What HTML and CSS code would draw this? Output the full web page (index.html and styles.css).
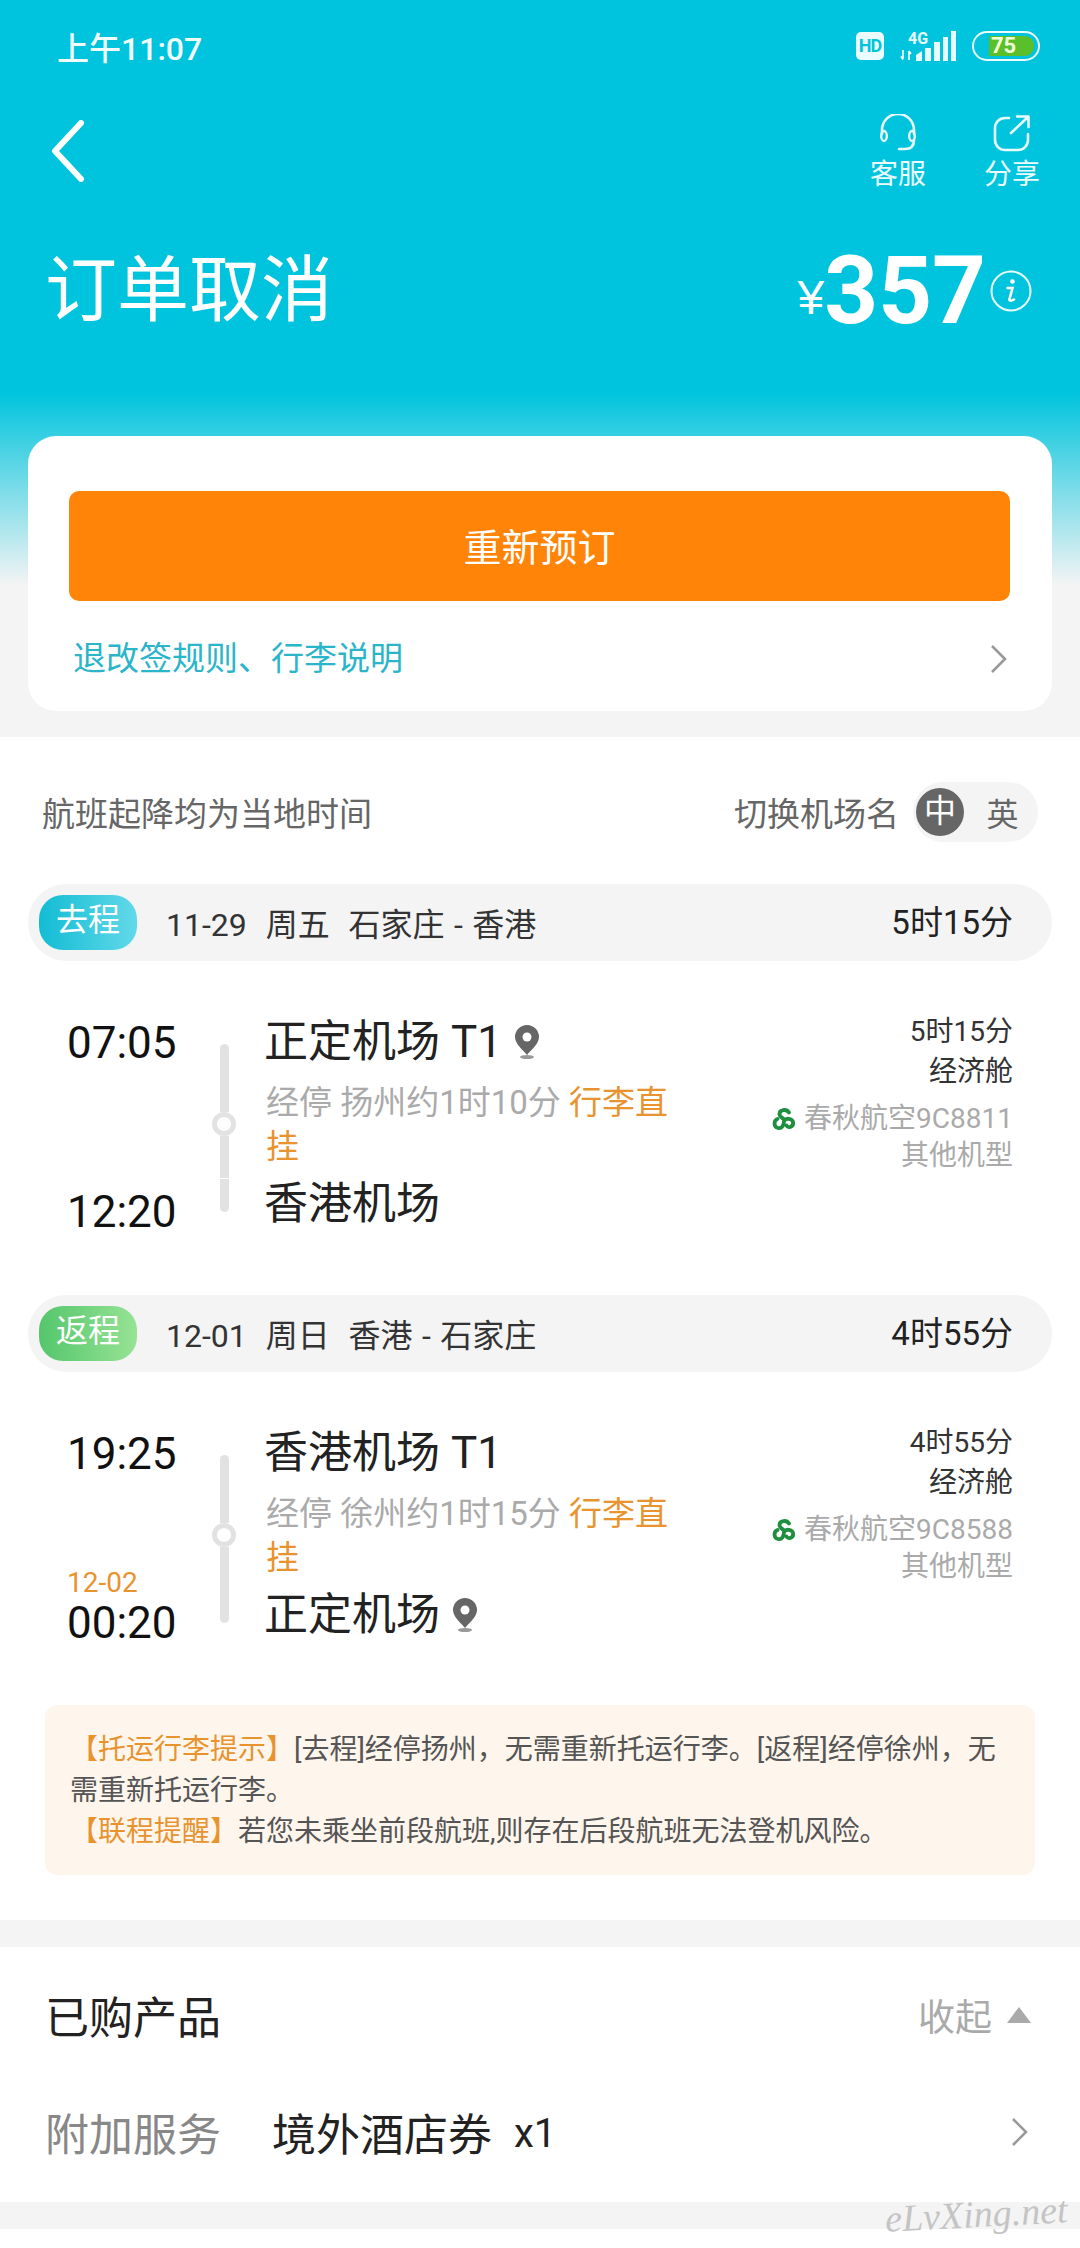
FILE: index.html
```html
<!DOCTYPE html>
<html lang="zh-CN">
<head>
<meta charset="utf-8">
<title>订单取消</title>
<link rel="stylesheet" href="styles.css">
</head>
<body>
<div class="page">
  <header class="top">
    <div class="status">
      <span class="clock">上午11:07</span>
      <div class="status-icons">
        <span class="hd">HD</span>
        <div class="net">
          <span class="net-label">4G</span>
          <svg class="net-arrows" viewBox="0 0 12 12" width="12" height="12"><path d="M3 1v9M1 7.500 3 10.500M9 11V2M9 2l2 3" fill="none" stroke="#fff" stroke-width="1.600"/></svg>
        </div>
        <svg class="signal" viewBox="0 0 40 30" width="40" height="30"><path d="M0 30V24L6 20V30ZM9 30V17h6V30ZM18 30V11h6V30ZM27 30V6h5V30ZM35 30V0h5V30Z" fill="#e8fbfd"/></svg>
        <div class="battery"><span class="battery-fill">75</span></div>
      </div>
    </div>
    <div class="nav">
      <svg class="back" viewBox="0 0 36 62" width="36" height="62"><path d="M31 3 5 31l26 28" fill="none" stroke="#fff" stroke-width="6" stroke-linecap="round" stroke-linejoin="round"/></svg>
      <div class="actions">
        <div class="action">
          <svg viewBox="0 0 40 38" width="40" height="38"><path d="M4 20v-4a15.500 15.500 0 0 1 32 0v4M36 26c0 6-3 9-9 9h-6" fill="none" stroke="#e8fbfd" stroke-width="2.600" stroke-linecap="round"/><ellipse cx="6" cy="22" rx="2.800" ry="5" fill="none" stroke="#e8fbfd" stroke-width="2.400"/><ellipse cx="34" cy="22" rx="2.800" ry="5" fill="none" stroke="#e8fbfd" stroke-width="2.400"/></svg>
          <span>客服</span>
        </div>
        <div class="action">
          <svg viewBox="0 0 40 38" width="40" height="38"><path d="M17 4h-4a10 10 0 0 0-10 10v12a10 10 0 0 0 10 10h13a10 10 0 0 0 10-10v-6M19 19 36 3M25 2.500h11.500V13" fill="none" stroke="#e8fbfd" stroke-width="2.600" stroke-linecap="round" stroke-linejoin="round"/></svg>
          <span>分享</span>
        </div>
      </div>
    </div>
    <div class="headline">
      <h1 class="title">订单取消</h1>
      <div class="price">
        <span class="yen">¥</span><span class="amount">357</span>
        <svg class="info" viewBox="0 0 42 42" width="42" height="42"><circle cx="21" cy="21" r="19.500" fill="none" stroke="#e8fbfd" stroke-width="2"/><circle cx="22.500" cy="11.500" r="2.300" fill="#fff"/><path d="M17.500 18h5l-3 11c-.5 2 1.500 2.500 4.500.5" fill="none" stroke="#fff" stroke-width="2.600" stroke-linecap="round"/></svg>
      </div>
    </div>
    <section class="card">
      <div class="rebook">重新预订</div>
      <div class="rules">
        <span>退改签规则、行李说明</span>
        <svg class="rules-arrow" viewBox="0 0 18 30" width="18" height="30"><path d="M2 2 15 15 2 28" fill="none" stroke="#999" stroke-width="2.600"/></svg>
      </div>
    </section>
  </header>

  <main class="flights">
    <div class="switch-row">
      <span class="local-note">航班起降均为当地时间</span>
      <div class="switcher">
        <span class="switch-label">切换机场名</span>
        <div class="toggle"><span class="toggle-on">中</span><span class="toggle-off">英</span></div>
      </div>
    </div>

    <div class="leg-bar">
      <span class="leg-tag leg-go">去程</span>
      <span class="leg-info">11-29&nbsp; 周五&nbsp; 石家庄 - 香港</span>
      <span class="leg-dur">5时15分</span>
    </div>
    <div class="flight">
      <div class="times">
        <div class="time">07:05</div>
        <div class="time">12:20</div>
      </div>
      <div class="rail"><i class="seg s1"></i><i class="dot"></i><i class="seg s2"></i><i class="seg s3"></i></div>
      <div class="route">
        <div class="airport">正定机场 T1
          <svg class="pin" viewBox="0 0 26 34" width="26" height="34"><path d="M13 0a12 12 0 0 0-12 12c0 7 8 13 12 18 4-5 12-11 12-18a12 12 0 0 0-12-12Z" fill="#666"/><circle cx="13" cy="12" r="4.500" fill="#fff"/><ellipse cx="13" cy="32" rx="7" ry="2" fill="#999"/></svg>
        </div>
        <div class="stop">经停 扬州约1时10分 <em>行李直挂</em></div>
        <div class="airport">香港机场</div>
      </div>
      <div class="meta">
        <div>5时15分</div>
        <div>经济舱</div>
        <div class="carrier">
          <svg viewBox="0 0 24 24" width="24" height="24"><path d="M17 5.500C14.500 1.500 7.500 2.500 7.500 7c0 3 3.500 4 5 6M12.500 13.500c1.500-2.500 7.500-2.500 8.500 1.500 1 5-5 6.500-6.500 3.500M5.500 12C1.500 13.500 1.500 20 6 21c4 1 6-3 6-7" fill="none" stroke="#1e8f3e" stroke-width="3.800" stroke-linecap="round"/></svg>
          春秋航空9C8811
        </div>
        <div class="plane">其他机型</div>
      </div>
    </div>

    <div class="leg-bar">
      <span class="leg-tag leg-back">返程</span>
      <span class="leg-info">12-01&nbsp; 周日&nbsp; 香港 - 石家庄</span>
      <span class="leg-dur">4时55分</span>
    </div>
    <div class="flight last">
      <div class="times">
        <div class="time">19:25</div>
        <div><div class="next-day">12-02</div><div class="time">00:20</div></div>
      </div>
      <div class="rail"><i class="seg s1"></i><i class="dot"></i><i class="seg s4"></i></div>
      <div class="route">
        <div class="airport">香港机场 T1</div>
        <div class="stop">经停 徐州约1时15分 <em>行李直挂</em></div>
        <div class="airport">正定机场
          <svg class="pin" viewBox="0 0 26 34" width="26" height="34"><path d="M13 0a12 12 0 0 0-12 12c0 7 8 13 12 18 4-5 12-11 12-18a12 12 0 0 0-12-12Z" fill="#666"/><circle cx="13" cy="12" r="4.500" fill="#fff"/><ellipse cx="13" cy="32" rx="7" ry="2" fill="#999"/></svg>
        </div>
      </div>
      <div class="meta">
        <div>4时55分</div>
        <div>经济舱</div>
        <div class="carrier">
          <svg viewBox="0 0 24 24" width="24" height="24"><path d="M17 5.500C14.500 1.500 7.500 2.500 7.500 7c0 3 3.500 4 5 6M12.500 13.500c1.500-2.500 7.500-2.500 8.500 1.500 1 5-5 6.500-6.500 3.500M5.500 12C1.500 13.500 1.500 20 6 21c4 1 6-3 6-7" fill="none" stroke="#1e8f3e" stroke-width="3.800" stroke-linecap="round"/></svg>
          春秋航空9C8588
        </div>
        <div class="plane">其他机型</div>
      </div>
    </div>

    <div class="notice">
      <p><b>【托运行李提示】</b>[去程]经停扬州，无需重新托运行李。[返程]经停徐州，无需重新托运行李。</p>
      <p><b>【联程提醒】</b>若您未乘坐前段航班,则存在后段航班无法登机风险。</p>
    </div>
  </main>

  <div class="gap"></div>

  <section class="products">
    <div class="prod-row">
      <span class="prod-title">已购产品</span>
      <span class="collapse">收起<i class="tri"></i></span>
    </div>
    <div class="prod-row">
      <span class="prod-label">附加服务</span>
      <span class="prod-name">境外酒店券</span>
      <span class="prod-qty">x1</span>
      <svg class="prod-arrow" viewBox="0 0 18 30" width="18" height="30"><path d="M2 2 15 15 2 28" fill="none" stroke="#999" stroke-width="2.600"/></svg>
    </div>
  </section>

  <div class="gap"></div>
  <div class="watermark">eLvXing.net</div>
</div>
</body>
</html>
```

FILE: styles.css
```css
* { box-sizing: border-box; }
html, body { margin: 0; padding: 0; }
body {
  font-family: Roboto, "Noto Sans CJK SC", sans-serif;
  color: #222;
  background: #fff;
}
.page {
  position: relative;
  width: 1080px;
  height: 2248px;
  overflow: hidden;
  background: #fff;
}
.top {
  height: 737px;
  padding-bottom: 26px;
  background: linear-gradient(180deg, #00c4dd 0, #00c4dd 393px, #f4f4f4 585px);
  color: #fff;
}

/* status bar */
.status {
  display: flex;
  align-items: center;
  justify-content: space-between;
  height: 92px;
  margin-bottom: 2px;
  padding: 0 40px 0 57px;
}
.clock { font-size: 32px; font-weight: 500; color: #f2fdfe; }
.status-icons { display: flex; align-items: center; height: 32px; }
.hd {
  width: 28px;
  height: 28px;
  border-radius: 5px;
  background: #eafcfe;
  color: #00c4dd;
  font-size: 18px;
  font-weight: 700;
  line-height: 28px;
  text-align: center;
  letter-spacing: -1px;
}
.net {
  position: relative;
  width: 36px;
  height: 30px;
  margin-left: 16px;
}
.net-label {
  display: block;
  padding-left: 8px;
  font-size: 16px;
  font-weight: 700;
  line-height: 16px;
  color: #eafcfe;
}
.net-arrows { display: block; margin-top: 2px; }
.signal { margin-left: -20px; }
.battery {
  width: 68px;
  height: 30px;
  margin-left: 16px;
  padding: 3px 4px 3px 15px;
  border: 2.500px solid #eafcfe;
  border-radius: 15px;
}
.battery-fill {
  display: block;
  height: 100%;
  border-radius: 0 9px 9px 0;
  background: #5bbf2c;
  color: #f0ffd8;
  font-size: 22px;
  font-weight: 700;
  line-height: 20px;
  padding-left: 2px;
}

/* nav */
.nav {
  display: flex;
  justify-content: space-between;
  height: 100px;
  padding: 0 40px 0 50px;
}
.back { margin-top: 26px; }
.actions { display: flex; gap: 58px; padding-top: 20px; }
.action {
  display: flex;
  flex-direction: column;
  align-items: center;
  width: 56px;
  font-size: 28px;
  line-height: 36px;
  color: #eafcfe;
}
.action svg { margin-bottom: 5px; }

/* headline */
.headline {
  display: flex;
  align-items: center;
  justify-content: space-between;
  height: 100px;
  margin-top: 47px;
  padding: 0 48px 0 45px;
}
.title { margin: 0; font-size: 72px; font-weight: 400; line-height: 80px; }
.price { display: flex; align-items: center; }
.yen { margin-top: 12px; margin-left: 2px; font-size: 48px; font-weight: 500; font-family: "Liberation Sans", sans-serif; }
.amount { font-size: 94px; font-weight: 700; line-height: 100px; }
.info { margin-left: 4px; }

/* action card */
.card {
  height: 275px;
  margin: 95px 28px 0;
  padding-top: 55px;
  border-radius: 28px;
  background: #fff;
}
.rebook {
  height: 110px;
  margin: 0 42px 0 41px;
  border-radius: 10px;
  background: #ff8408;
  color: #fff;
  font-size: 38px;
  line-height: 114px;
  text-align: center;
}
.rules {
  display: flex;
  align-items: center;
  justify-content: space-between;
  height: 110px;
  padding: 0 44px 0 45px;
  color: #2bb5c9;
  font-size: 33px;
}
.rules-arrow { margin-top: 6px; }

/* flights */
.flights { padding-bottom: 45px; background: #fff; }
.switch-row {
  display: flex;
  align-items: center;
  justify-content: space-between;
  height: 147px;
  padding: 45px 42px 42px;
  color: #666;
  font-size: 33px;
}
.switcher { display: flex; align-items: center; gap: 14px; }
.toggle {
  display: flex;
  align-items: center;
  width: 125px;
  height: 60px;
  padding: 0 5px 0 3px;
  border-radius: 30px;
  background: #f4f4f4;
}
.toggle-on {
  width: 48px;
  height: 48px;
  border-radius: 50%;
  background: #666;
  color: #fff;
  font-size: 32px;
  line-height: 46px;
  text-align: center;
}
.toggle-off { flex: 1; padding-left: 8px; color: #666; font-size: 32px; text-align: center; }
.leg-bar {
  display: flex;
  align-items: center;
  height: 77px;
  margin: 0 28px;
  padding: 0 39px 0 11px;
  border-radius: 38px;
  background: #f4f4f4;
}
.leg-tag {
  width: 98px;
  height: 55px;
  border-radius: 24px;
  color: #fff;
  font-size: 32px;
  line-height: 50px;
  text-align: center;
}
.leg-go { background: linear-gradient(90deg, #12bcd4, #62d9e9); }
.leg-back { background: linear-gradient(90deg, #55c66c, #96e394); }
.leg-info { flex: 1; margin-left: 29px; margin-bottom: 2px; font-size: 32px; word-spacing: 1.500px; color: #333; }
.leg-dur { margin-bottom: 5px; font-size: 33px; color: #222; }
.flight {
  display: flex;
  height: 334px;
  padding: 56px 67px 0;
}
.flight.last { height: 333px; }
.times {
  display: flex;
  flex-direction: column;
  justify-content: space-between;
  flex: none;
  width: 109px;
  height: 219px;
  margin-top: 1px;
}
.time { font-size: 44px; line-height: 50px; color: #111; white-space: nowrap; }
.next-day { font-size: 28px; line-height: 30px; color: #e8932e; }
.rail {
  display: flex;
  flex-direction: column;
  align-items: center;
  flex: none;
  width: 24px;
  height: 168px;
  margin: 27px 0 0 36px;
}
.seg { display: block; width: 9px; background: #e2e2e2; }
.s1 { height: 68px; border-radius: 5px 5px 0 0; }
.s2 { height: 42px; margin-bottom: 1px; }
.s3 { height: 33px; border-radius: 0 0 5px 5px; }
.s4 { height: 76px; border-radius: 0 0 5px 5px; }
.dot {
  display: block;
  flex: none;
  width: 24px;
  height: 24px;
  border: 5px solid #e2e2e2;
  border-radius: 50%;
  background: #fff;
}
.route { flex: none; width: 420px; margin-left: 30px; }
.airport {
  display: flex;
  align-items: center;
  gap: 12px;
  height: 50px;
  margin-left: -2px;
  font-size: 44px;
  line-height: 50px;
  color: #222;
}
.stop {
  margin: 14px 0 10px;
  font-size: 33px;
  line-height: 44px;
  color: #aaa;
}
.stop em { font-style: normal; color: #e8932e; }
.meta {
  flex: 1;
  margin-top: -5px;
  font-size: 28px;
  line-height: 40px;
  text-align: right;
  color: #333;
  white-space: nowrap;
}
.carrier, .plane { line-height: 37px; color: #aaa; }
.carrier { display: flex; align-items: center; justify-content: flex-end; gap: 8px; margin-top: 8px; }

/* notice */
.notice {
  height: 170px;
  margin: 0 45px;
  padding: 24px 25px 0;
  border-radius: 12px;
  background: #fef6ec;
  font-size: 28px;
  line-height: 41px;
  color: #555;
}
.notice p { margin: 0; }
.notice b { font-weight: 400; color: #e8932e; }

/* products */
.gap { height: 27px; background: #f4f4f4; }
.products { padding: 9px 49px 12px 45px; background: #fff; }
.prod-row { display: flex; align-items: center; height: 117px; font-size: 44px; }
.prod-title { flex: 1; color: #222; }
.collapse { display: flex; align-items: center; font-size: 37px; color: #aaa; }
.tri {
  width: 0;
  height: 0;
  margin-left: 15px;
  border-left: 12px solid transparent;
  border-right: 12px solid transparent;
  border-bottom: 16px solid #aaa;
}
.prod-label { color: #888; }
.prod-name { margin-left: 51px; color: #222; }
.prod-qty { flex: 1; margin-left: 22px; margin-top: 4px; font-size: 40px; color: #222; }
.prod-arrow { flex: none; margin-right: 2px; }

.watermark {
  position: absolute;
  right: 12px;
  bottom: 12px;
  font-family: "Liberation Serif", serif;
  font-size: 38px;
  font-style: italic;
  color: #c4c4c4;
  transform: rotate(-3deg);
}
```
